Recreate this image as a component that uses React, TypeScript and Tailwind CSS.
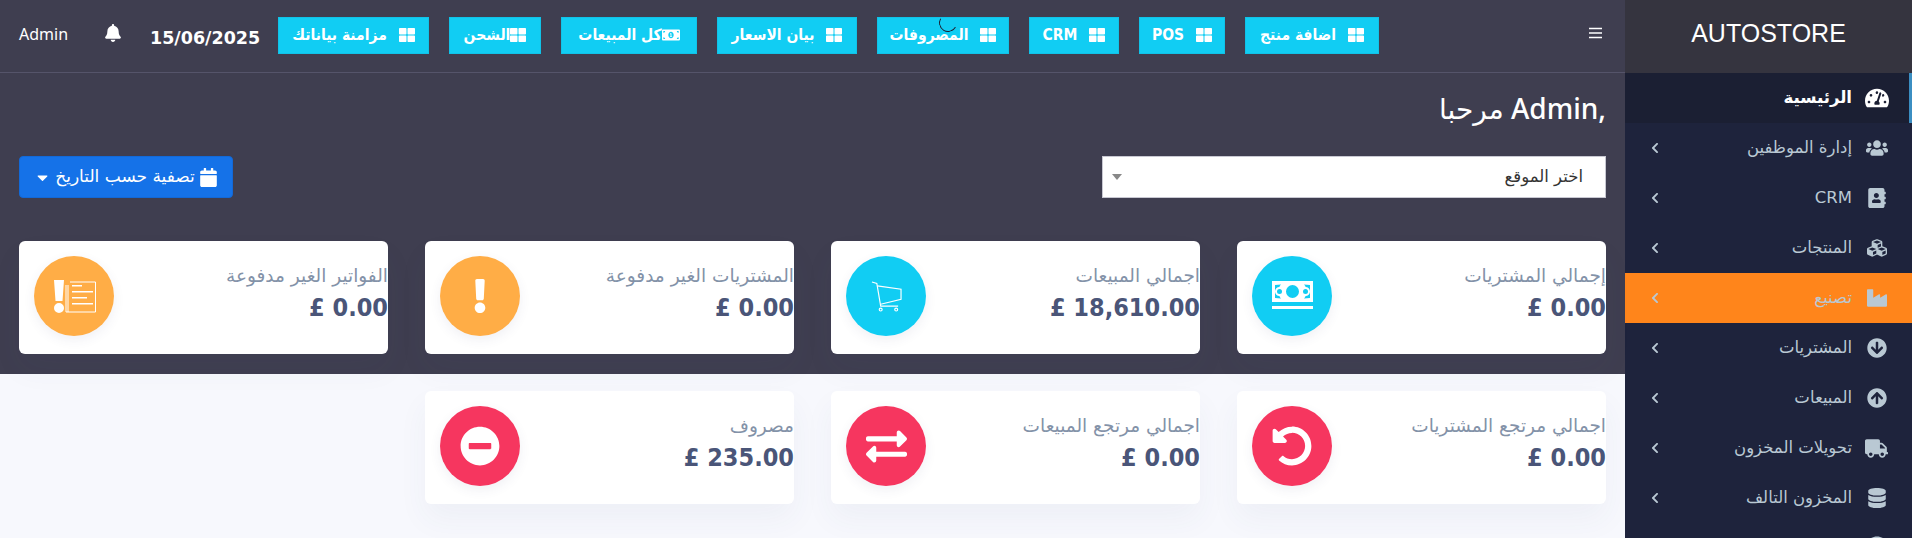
import React from "react";
import {
  FaThLarge, FaBell, FaCalendar, FaCaretDown, FaMoneyBillAlt, FaTachometerAlt, FaUsers, FaAddressBook,
  FaCubes, FaIndustry, FaArrowCircleDown, FaArrowCircleUp, FaTruck, FaDatabase, FaChevronLeft,
  FaExclamation, FaMinusCircle, FaUndoAlt, FaExchangeAlt, FaInfoCircle,
} from "react-icons/fa";

const font = "font-['DejaVu_Sans','Noto_Sans',sans-serif]";

function ToolButton({ label, width, tight, money }: { label: string; width: string; tight?: boolean; money?: boolean }) {
  return (
    <button dir="rtl" className={`${width} h-[37px] bg-[#11cdf3] border border-[#10c3e8] text-white text-[15.500px] font-semibold font-['DejaVu_Sans_Condensed','DejaVu_Sans',sans-serif] flex items-center justify-center ${tight ? "gap-0" : "gap-[12px]"}`}>
      {money ? <FaMoneyBillAlt className="text-[18px] shrink-0 -mt-[1px]" /> : <FaThLarge className="text-[16px] shrink-0 -mt-[1px]" />}
      <span>{label}</span>
    </button>
  );
}

function CashIcon() {
  return (
    <svg width="41" height="30" viewBox="0 0 41 30" fill="white">
      <path fillRule="evenodd" d="M0 0h41v21H0zM9 3.500 3 4v13l6 .5c-1-1-1.500-2-1.500-2.500C5 15 3 13 3 10.500S5 6 7.500 6c0-1 .5-1.500 1.500-2.500zM32 3.500c1 1 1.500 1.500 1.500 2.500C36 6 38 8 38 10.500S36 15 33.500 15c0 .5-.5 1.500-1.500 2.500l6-.5V4zM20.500 4a6.500 6.500 0 1 0 0 13 6.500 6.500 0 0 0 0-13z" />
      <circle cx="7.500" cy="10.500" r="2.500" fill="#11cdf3" />
      <circle cx="33.500" cy="10.500" r="2.500" fill="#11cdf3" />
      <path d="M0 25h41v3H0z" />
    </svg>
  );
}

function CartIcon() {
  return (
    <svg width="31" height="31" viewBox="0 0 32 32" fill="none" stroke="white" strokeWidth="1.200">
      <path d="M1 1l5 1.500 4 23.500H28" />
      <path d="M6.500 5 31 8.500v10.500l-21 5" />
      <circle cx="10" cy="29.500" r="1.500" />
      <circle cx="26" cy="29.500" r="1.500" />
    </svg>
  );
}

function InvoiceIcon() {
  return (
    <svg width="43" height="33" viewBox="0 0 43 33" fill="white">
      <path d="M1 0h10l-1.500 21h-7zM6 23a5 5 0 1 1 0 10 5 5 0 0 1 0-10z" />
      <g fill="none" stroke="white" strokeWidth="1">
        <path d="M17 2h25.500v30H15V5" />
        <path d="M13 5v27h2" />
      </g>
      <path d="M19 5h10v1.500H19zM19 11h21v1.500H19zM19 17h15v1.500H19zM19 23h21v1.500H19z" />
    </svg>
  );
}

function Card({ label, value, circle, icon }: { label: string; value: string; circle: string; icon: React.ReactNode }) {
  return (
    <div className="h-[113px] rounded-md bg-white flex items-start justify-between pl-[15px] pt-[15px] shadow-[0_15px_30px_rgba(60,70,120,0.05)]">
      <div className={`${circle} w-20 h-20 rounded-full flex items-center justify-center shrink-0 shadow-[0_4px_12px_rgba(60,70,120,0.08)]`}>{icon}</div>
      <div dir="rtl" className={`${font} pt-[7px]`}>
        <div className="text-[18.500px] leading-[26px] text-[#8392a8]">{label}</div>
        <div dir="ltr" className="text-right font-['DejaVu_Sans_Condensed','DejaVu_Sans',sans-serif] text-[25px] leading-[32px] mt-[3px] font-bold text-[#4a5578]">{value}</div>
      </div>
    </div>
  );
}

const items: { label: string; Icon: React.ComponentType<{ className?: string }>; size: string; orange?: boolean }[] = [
  { label: "إدارة الموظفين", Icon: FaUsers, size: "text-[22px]" },
  { label: "CRM", Icon: FaAddressBook, size: "text-[20px]" },
  { label: "المنتجات", Icon: FaCubes, size: "text-[20px]" },
  { label: "تصنيع", Icon: FaIndustry, size: "text-[20px]", orange: true },
  { label: "المشتريات", Icon: FaArrowCircleDown, size: "text-[20px]" },
  { label: "المبيعات", Icon: FaArrowCircleUp, size: "text-[20px]" },
  { label: "تحويلات المخزون", Icon: FaTruck, size: "text-[23px]" },
  { label: "المخزون التالف", Icon: FaDatabase, size: "text-[20px]" },
];

export default function App() {
  return (
    <div className={`${font} flex h-[538px] w-[1912px] overflow-hidden bg-[#f7f8fd]`}>
      <main className="relative w-[1625px] shrink-0">
        <div className="bg-[#3f3e50] h-[374px]">
          <header className="h-[73px] border-b border-[#55546a] flex items-center pl-[19px] pr-[22px] pb-[1px]">
            <span className="font-['Noto_Sans',sans-serif] text-white text-[16px] w-[66px] mb-[4px]">Admin</span>
            <FaBell className="text-white text-[18px] ml-[19px] mb-[6px]" />
            <span className="text-white text-[17.500px] font-bold ml-[28px] w-[128px] mt-[5px]">15/06/2025</span>
            <div className="flex gap-5">
              <ToolButton label="مزامنة بياناتك" width="w-[151px]" />
              <ToolButton label="الشحن" width="w-[92px]" tight />
              <ToolButton label="كل المبيعات" width="w-[136px]" tight money />
              <ToolButton label="بيان الاسعار" width="w-[140px]" />
              <ToolButton label="المصروفات" width="w-[132px]" />
              <ToolButton label="CRM" width="w-[90px]" />
              <ToolButton label="POS" width="w-[86px]" />
              <ToolButton label="اضافة منتج" width="w-[134px]" />
            </div>
            <svg width="13" height="12" viewBox="0 0 13 12" stroke="white" strokeWidth="1.300" className="ml-auto mb-[6px] mr-[1px]">
              <path d="M0 1.500h13M0 6h13M0 10.500h13" />
            </svg>
          </header>

          <div className="pl-[19px] pr-[19px]">
            <h1 dir="rtl" className="font-['Noto_Sans','DejaVu_Sans',sans-serif] text-white text-[28px] font-medium leading-[36px] mt-[17px]">,Admin مرحبا</h1>
            <div className="flex justify-between mt-[30px]">
              <button dir="rtl" className="w-[214px] h-[42px] rounded bg-[#1572e8] border border-[#1269d8] text-white text-[17px] flex items-center justify-center gap-1">
                <FaCalendar className="text-[19px]" />
                <span>تصفية حسب التاريخ</span>
                <FaCaretDown className="text-[17px]" />
              </button>
              <div dir="rtl" className="w-[504px] h-[42px] bg-white border border-[#c8c8d2] flex items-center justify-between pr-[22px] pl-[9px] text-[16.500px] text-[#333]">
                <span>اختر الموقع</span>
                <span className="w-0 h-0 border-x-[5px] border-x-transparent border-t-[6px] border-t-[#888]" />
              </div>
            </div>
          </div>
        </div>

        <div className="absolute left-[19px] top-[241px] grid grid-cols-[repeat(4,369px)] gap-x-[37px] gap-y-[37px]">
          <Card label="الفواتير الغير مدفوعة" value="£ 0.00" circle="bg-[#ffad46]" icon={<InvoiceIcon />} />
          <Card label="المشتريات الغير مدفوعة" value="£ 0.00" circle="bg-[#ffad46]" icon={<FaExclamation className="text-white text-[34px]" />} />
          <Card label="اجمالي المبيعات" value="£ 18,610.00" circle="bg-[#11cdf3]" icon={<CartIcon />} />
          <Card label="إجمالي المشتريات" value="£ 0.00" circle="bg-[#11cdf3]" icon={<CashIcon />} />
          <div />
          <Card label="مصروف" value="£ 235.00" circle="bg-[#f6365f]" icon={<FaMinusCircle className="text-white text-[40px]" />} />
          <Card label="اجمالي مرتجع المبيعات" value="£ 0.00" circle="bg-[#f6365f]" icon={<FaExchangeAlt className="text-white text-[41px]" />} />
          <Card label="اجمالي مرتجع المشتريات" value="£ 0.00" circle="bg-[#f6365f]" icon={<FaUndoAlt className="text-white text-[40px]" />} />
        </div>

        <span className="absolute left-[939px] top-[14px] w-[18px] h-[18px] rounded-full border-[1.500px] border-transparent border-l-[#1d2033] border-b-[#1d2033] -rotate-[15deg]" />
      </main>

      <aside dir="rtl" className="w-[287px] shrink-0 bg-[#1e233c] text-[#b9c8d3] h-[538px] overflow-hidden">
        <div className="h-[73px] bg-[#35343f] flex items-center justify-center text-white text-[25px] font-['Liberation_Sans',sans-serif] pb-[5px]">AUTOSTORE</div>
        <div className="h-[50px] bg-[#1b1f33] border-r-[3px] border-r-[#3b8ec2] flex items-center pr-[20px] text-white font-bold text-[16.500px]">
          <span className="w-[25px] flex justify-center ml-[12px]"><FaTachometerAlt className="text-[24px]" /></span>
          <span>الرئيسية</span>
        </div>
        {items.map(({ label, Icon, size, orange }) => (
          <div key={label} className={`h-[50px] flex items-center pr-[23px] pl-[24px] text-[16.500px] ${orange ? "bg-[#ff851b]" : ""}`}>
            <span className="w-[25px] flex justify-center ml-[12px]">
              <Icon className={size} />
            </span>
            <span className="flex-1">{label}</span>
            <FaChevronLeft className="text-[12px]" />
          </div>
        ))}
        <div className="h-[50px] flex items-center pr-[23px]">
          <span className="w-[25px] flex justify-center"><FaInfoCircle className="text-[24px]" /></span>
        </div>
      </aside>
    </div>
  );
}
